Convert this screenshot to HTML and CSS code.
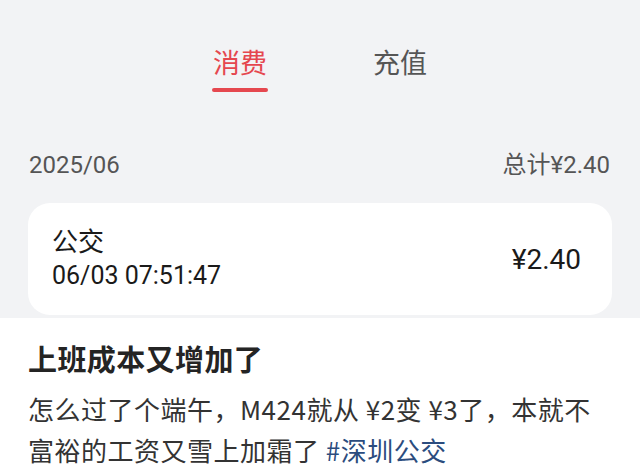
FILE: index.html
```html
<!DOCTYPE html>
<html lang="zh-CN">
<head>
    <meta charset="UTF-8">
    <meta name="viewport" content="width=device-width, initial-scale=1.0">
    <title>账单</title>
    <link rel="stylesheet" href="styles.css">
</head>
<body>
    <div class="top">
        <nav class="tabs">
            <div class="tab active">消费</div>
            <div class="tab">充值</div>
        </nav>
        <div class="summary">
            <span>2025/06</span>
            <span>总计¥2.40</span>
        </div>
        <div class="record">
            <div class="record-info">
                <div class="record-name">公交</div>
                <div class="record-time">06/03 07:51:47</div>
            </div>
            <div class="record-amount">¥2.40</div>
        </div>
    </div>
    <div class="post">
        <h2>上班成本又增加了</h2>
        <p>怎么过了个端午，M424就从 ¥2变 ¥3了，本就不富裕的工资又雪上加霜了 <span class="tag">#深圳公交</span></p>
    </div>
</body>
</html>
```

FILE: styles.css
```css
* {
    margin: 0;
    padding: 0;
    box-sizing: border-box;
}

body {
    background-color: #fff;
    font-family: Roboto, "Noto Sans CJK SC", sans-serif;
    color: #1a1a1a;
}

.top {
    background-color: #f2f3f5;
    padding: 44px 28px 3px;
}

.tabs {
    display: flex;
    justify-content: center;
}

.tab {
    width: 160px;
    text-align: center;
    font-size: 27px;
    line-height: 40px;
    color: #555;
}

.tab.active {
    color: #e5474f;
}

.tab.active::after {
    content: "";
    display: block;
    width: 56px;
    height: 4px;
    margin: 4px auto 0;
    border-radius: 2px;
    background-color: #e5474f;
}

.summary {
    display: flex;
    justify-content: space-between;
    margin-top: 57px;
    padding: 0 2px 0 1px;
    font-size: 24px;
    line-height: 32px;
    color: #555;
}

.record {
    display: flex;
    justify-content: space-between;
    align-items: center;
    margin-top: 22px;
    padding: 22px 31px 22px 24px;
    background-color: #fff;
    border-radius: 22px;
}

.record-name {
    font-size: 26px;
    line-height: 34px;
}

.record-time {
    font-size: 25px;
    line-height: 34px;
}

.record-amount {
    font-size: 28px;
}

.post {
    padding: 20px 28px 0;
    font-family: "Noto Sans CJK SC", sans-serif;
}

.post h2 {
    font-size: 29px;
    line-height: 40px;
    font-weight: bold;
    letter-spacing: 0.4px;
    color: #242424;
}

.post p {
    margin-top: 10px;
    font-size: 26px;
    line-height: 41px;
    letter-spacing: 0.5px;
    color: #333;
}

.tag {
    color: #2b4c7e;
}
```
